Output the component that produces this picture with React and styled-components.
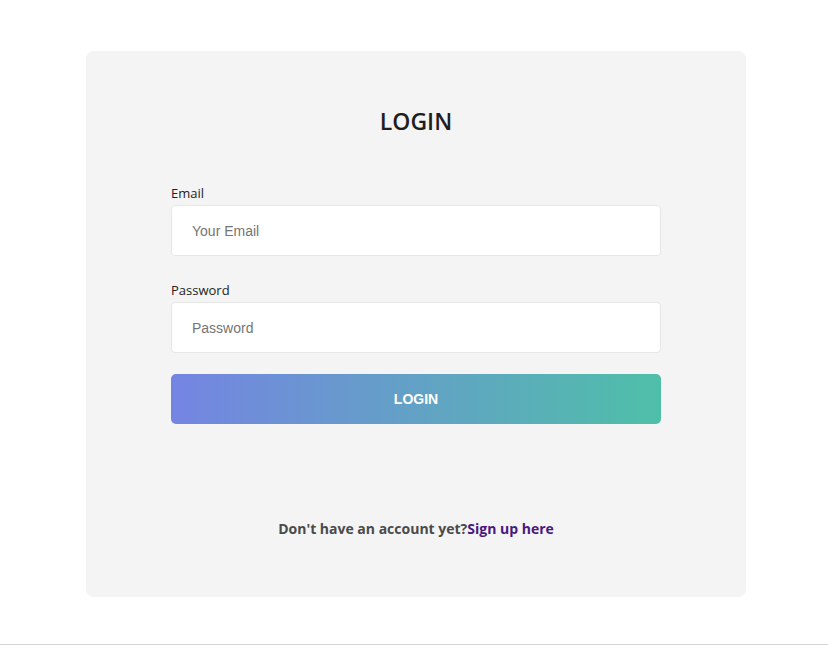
import React from 'react';
import styled, { createGlobalStyle } from 'styled-components';

const GlobalStyle = createGlobalStyle`
  body {
    margin: 0;
    background: #fff;
    font-family: "Open Sans", "Noto Sans", Arial, sans-serif;
  }
`;

const Page = styled.div`
  padding: 51px 0 0 4px;
`;

const Card = styled.form`
  width: 660px;
  box-sizing: border-box;
  margin: 0 auto;
  padding: 54px 85px 58px;
  background: #f4f4f4;
  border-radius: 8px;
`;

const Title = styled.h1`
  margin: 0 0 45px;
  font-size: 23px;
  line-height: 32px;
  font-weight: 600;
  text-align: center;
  color: #1e1e1e;
`;

const Field = styled.div`
  margin-bottom: ${p => p.$last ? '21px' : '23px'};
`;

const Label = styled.label`
  display: block;
  margin-bottom: 1px;
  font-size: 13px;
  line-height: 22px;
  color: #222;
`;

const Input = styled.input`
  display: block;
  width: 100%;
  height: 51px;
  box-sizing: border-box;
  padding: 0 20px;
  border: 1px solid #e6e6e6;
  border-radius: 4px;
  background: #fff;
  font-family: Arial, "Liberation Sans", sans-serif;
  font-size: 14px;
  color: #333;
  outline: none;

  &::placeholder {
    color: #757575;
  }
`;

const Button = styled.button`
  display: block;
  width: 100%;
  height: 50px;
  border: none;
  border-radius: 5px;
  background: linear-gradient(to right, #7584e2, #4fbfa8);
  color: #fff;
  font-family: Arial, "Liberation Sans", sans-serif;
  font-size: 14px;
  font-weight: bold;
  cursor: pointer;
`;

const SignUp = styled.p`
  margin: 95px 0 0;
  text-align: center;
  font-size: 14px;
  line-height: 20px;
  font-weight: 700;
  color: #4a4a4a;

  a {
    color: #4a1880;
    text-decoration: none;
  }
`;

const Footer = styled.footer`
  margin-top: 47px;
  border-top: 1px solid #d6d6d6;
`;

export default function App() {
  return (
    <>
      <GlobalStyle />
      <Page>
        <Card onSubmit={e => e.preventDefault()}>
          <Title>LOGIN</Title>
          <Field>
            <Label htmlFor="email">Email</Label>
            <Input id="email" type="email" placeholder="Your Email" />
          </Field>
          <Field $last>
            <Label htmlFor="password">Password</Label>
            <Input id="password" type="password" placeholder="Password" />
          </Field>
          <Button type="submit">LOGIN</Button>
          <SignUp>
            Don't have an account yet?<a href="#signup">Sign up here</a>
          </SignUp>
        </Card>
      </Page>
      <Footer />
    </>
  );
}
